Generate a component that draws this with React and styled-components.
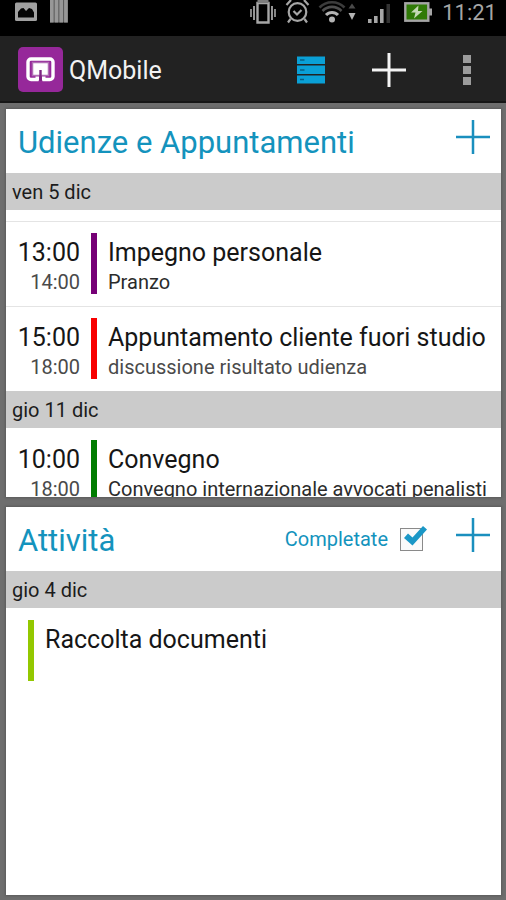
import React from "react";
import styled, { createGlobalStyle } from "styled-components";

const GlobalStyle = createGlobalStyle`
  * {
    box-sizing: border-box;
  }

  body {
    margin: 0;
    background: #6e6e6e;
    font-family: Roboto, "Liberation Sans", sans-serif;
  }
`;

const Screen = styled.div`
  display: flex;
  flex-direction: column;
  height: 100vh;
`;

const StatusBar = styled.div`
  flex: none;
  display: flex;
  justify-content: space-between;
  height: 36px;
  padding: 0 9px 0 15px;
  background: #000;
  color: #a6a6a6;
`;

const StatusGroup = styled.div`
  display: flex;
  align-items: flex-start;
  gap: ${p => p.$gap}px;

  & svg {
    display: block;
  }
`;

const Clock = styled.time`
  font-size: 22px;
  line-height: 26px;
`;

const ActionBar = styled.header`
  flex: none;
  display: flex;
  align-items: center;
  height: 67px;
  padding: 2px 0 0 18px;
  border-bottom: 2px solid #161616;
  background: #222;
`;

const AppTitle = styled.h1`
  flex: 1;
  margin: 0 0 0 6px;
  padding-top: 2px;
  font-size: 25px;
  font-weight: 400;
  color: #f2f2f2;
`;

const IconButton = styled.button`
  flex: none;
  display: flex;
  align-items: center;
  justify-content: center;
  width: ${p => p.$size}px;
  height: 56px;
  padding: 0;
  border: 0;
  background: none;
  cursor: pointer;
`;

const Main = styled.main`
  flex: 1;
  min-height: 0;
  display: flex;
  flex-direction: column;
  gap: 10px;
  padding: 6px 5px 5px 6px;
`;

const Panel = styled.section`
  flex: 1 1 0;
  min-height: 0;
  overflow: hidden;
  background: #fff;
  box-shadow: 0 0 2px 1px #5c5c5c;
`;

const PanelHeader = styled.div`
  display: flex;
  align-items: center;
  height: 64px;
  padding-left: 12px;
  color: #1493bd;
`;

const PanelTitle = styled.h2`
  flex: 1;
  margin: 0;
  padding-top: 2px;
  font-size: 31px;
  font-weight: 400;
  white-space: nowrap;
`;

const AddButton = styled(IconButton)`
  align-self: flex-start;
`;

const CompletedLabel = styled.label`
  display: flex;
  align-items: center;
  gap: 12px;
  margin-right: 22px;
  font-size: 20px;
`;

const CheckWrap = styled.span`
  position: relative;
  display: block;
  height: 23px;

  & svg {
    position: absolute;
    left: 3px;
    top: -3px;
    display: none;
    pointer-events: none;
  }

  & input:checked + svg {
    display: block;
  }
`;

const Checkbox = styled.input`
  appearance: none;
  display: block;
  width: 23px;
  height: 23px;
  margin: 0;
  border: 1px solid #8a8a8a;
  background: #fafafa;
`;

const Day = styled.h3`
  margin: 0;
  padding: 1px 6px 0;
  background: #cbcbcb;
  color: #1c1c1c;
  font-size: 20px;
  font-weight: 400;
  line-height: 36px;
`;

const List = styled.ul`
  margin: 0;
  padding: ${p => p.$top || 0}px 0 0;
  list-style: none;
`;

const Row = styled.li`
  display: flex;
  gap: 11px;
  padding: ${p => (p.$line ? 11 : 12)}px 0 12px ${p => p.$indent || 0}px;
  border-top: ${p => (p.$line ? "1px solid #e4e4e4" : "0")};
`;

const Times = styled.div`
  flex: none;
  width: 74px;
  text-align: right;
`;

const Bar = styled.span`
  flex: none;
  width: 6px;
  height: 61px;
  background: ${p => p.$color};
`;

const Primary = styled.div`
  padding-top: 1px;
  color: #161616;
  font-size: 25px;
  line-height: 37px;
  white-space: nowrap;
`;

const Secondary = styled.div`
  color: ${p => (p.$dark ? "#2b2b2b" : "#4a4a4a")};
  font-size: 20px;
  line-height: 22px;
  white-space: nowrap;
`;

const days = [
  {
    label: "ven 5 dic",
    top: 11,
    events: [
      { from: "13:00", to: "14:00", color: "#760076", title: "Impegno personale", note: "Pranzo", dark: true, line: true },
      { from: "15:00", to: "18:00", color: "#f80000", title: "Appuntamento cliente fuori studio", note: "discussione risultato udienza", line: true },
    ],
  },
  {
    label: "gio 11 dic",
    events: [
      { from: "10:00", to: "18:00", color: "#007c00", title: "Convegno", note: "Convegno internazionale avvocati penalisti", dark: true },
    ],
  },
];

const Plus = ({ color, width }) => (
  <svg width="34" height="34" viewBox="0 0 34 34" stroke={color} strokeWidth={width}>
    <path d="M17 0v34M0 17h34" />
  </svg>
);

const Logo = () => (
  <svg width="45" height="45" viewBox="0 0 45 45">
    <rect width="45" height="45" rx="5" fill="#96289a" />
    <path
      d="M20.500 32.500H13a3 3 0 0 1-3-3V15a3 3 0 0 1 3-3h19a3 3 0 0 1 3 3v14.500a3 3 0 0 1-3 3h-7.500"
      fill="none"
      stroke="#fff"
      strokeWidth="3.400"
    />
    <path d="M14.500 15.500h16v13h-16z" fill="#fff" stroke="#b06fb4" strokeWidth="1.500" />
    <path d="M21.300 23h2.400v11h-2.400z" fill="#7d2482" />
    <path d="M17.500 29.500h3.500v4h-3.500zM24 29.500h3.500v4H24z" fill="#fff" />
  </svg>
);

const PictureIcon = () => (
  <svg width="22" height="24" viewBox="0 0 22 24">
    <rect y="2.500" width="22" height="18.500" rx="1.500" fill="#a0a0a0" />
    <path d="M3 17.500V12l3-3.500 2.500-.5 2.500 3 3-3 3 1 2 3.500v5z" fill="#050505" />
  </svg>
);

const BarsIcon = () => (
  <svg width="18" height="24" viewBox="0 0 18 24">
    <path d="M0 0h18v22.500H0z" fill="#5c5c5c" />
    <path d="M0 0h3.600v22.500H0zM4.700 0h3.600v22.500H4.700zM9.400 0H13v22.500H9.400zM14.100 0h3.600v22.500h-3.600z" fill="#989898" />
  </svg>
);

const VibrateIcon = () => (
  <svg width="28" height="24" viewBox="0 0 28 24" fill="none" stroke="#a6a6a6">
    <path d="M8.500 3h11v19.500h-11z" strokeWidth="2.400" />
    <path d="M8.500 1.500h11" stroke="#7c7c7c" strokeWidth="3" />
    <path d="M5 6v14M23 6v14" strokeWidth="1.800" />
    <path d="M2 9v8M26 9v8" strokeWidth="1.600" />
  </svg>
);

const AlarmIcon = () => (
  <svg width="25" height="24" viewBox="0 0 25 24" fill="none" stroke="#a6a6a6" strokeWidth="2.200">
    <circle cx="12.500" cy="12" r="8.800" />
    <path d="M8.500 11l3.500 3.500 4.500-4.500M5.500 19L3 22.500M19.500 19l2.500 3.500M1.500 5l4.500-5M23.500 5L19-0" />
  </svg>
);

const WifiIcon = () => (
  <svg width="40" height="24" viewBox="0 0 40 24" fill="none" strokeWidth="2.600">
    <path d="M1.500 7.500a17.500 17.500 0 0 1 25 0" stroke="#3c3c3c" />
    <path d="M4.500 11a13 13 0 0 1 19 0" stroke="#4e4e4e" />
    <path d="M8 15a8.200 8.200 0 0 1 12 0" stroke="#b4b4b4" strokeWidth="3" />
    <circle cx="14" cy="19.500" r="3" fill="#b4b4b4" />
    <path d="M30.500 8.500h7L34 3.500z" fill="#4a4a4a" />
    <path d="M30.500 13h7L34 20z" fill="#b4b4b4" />
  </svg>
);

const SignalIcon = () => (
  <svg width="28" height="24" viewBox="0 0 28 24" fill="#a6a6a6">
    <path d="M2 19h3.600v4H2zM8 16h3.600v7H8zM14 9h3.600v14H14z" />
    <path d="M20.500 4h3.500v19h-3.500z" fill="#333" />
  </svg>
);

const BatteryIcon = () => (
  <svg width="32" height="24" viewBox="0 0 32 24">
    <rect x="3.300" y="3.300" width="23" height="17.400" fill="#2f7a06" stroke="#a6a6a6" strokeWidth="2.400" />
    <path d="M27 8.500h3v7h-3z" fill="#a6a6a6" />
    <path d="M16.500 5.500L9 12.500h4.500L12 18.500l8.500-7.500H16z" fill="#c4d8b4" />
  </svg>
);

const AgendaIcon = () => (
  <svg width="28" height="28" viewBox="0 0 28 28">
    <path d="M0 .5h28v7.500H0zM0 9.500h28V18H0zM0 19.500h28v8H0z" fill="#0aa0d6" />
    <path d="M3 4h4.500M3 14h4.500M3 23.500h4" stroke="#075f86" strokeWidth="1.500" />
  </svg>
);

const OverflowIcon = () => (
  <svg width="8" height="30" viewBox="0 0 8 30" fill="#9c9c9c">
    <path d="M0 0h8v8H0zM0 11h8v8H0zM0 22h8v8H0z" />
  </svg>
);

const Check = () => (
  <svg width="26" height="23" viewBox="0 0 26 23">
    <path d="M1 13l4-4.500 4.500 4L20 1l4 3.500L9.500 20.500z" fill="#1a97c6" />
  </svg>
);

export default function App() {
  return (
    <Screen>
      <GlobalStyle />
      <StatusBar>
        <StatusGroup $gap={13}>
          <PictureIcon />
          <BarsIcon />
        </StatusGroup>
        <StatusGroup $gap={8}>
          <VibrateIcon />
          <AlarmIcon />
          <WifiIcon />
          <SignalIcon />
          <BatteryIcon />
          <Clock>11:21</Clock>
        </StatusGroup>
      </StatusBar>

      <ActionBar>
        <Logo />
        <AppTitle>QMobile</AppTitle>
        <IconButton $size={78} aria-label="Agenda">
          <AgendaIcon />
        </IconButton>
        <IconButton $size={78} aria-label="Aggiungi">
          <Plus color="#f4f4f4" width={3} />
        </IconButton>
        <IconButton $size={78} aria-label="Altre opzioni">
          <OverflowIcon />
        </IconButton>
      </ActionBar>

      <Main>
        <Panel>
          <PanelHeader>
            <PanelTitle>Udienze e Appuntamenti</PanelTitle>
            <AddButton $size={56} aria-label="Aggiungi appuntamento">
              <Plus color="#1a8fbe" width={2.5} />
            </AddButton>
          </PanelHeader>
          {days.map(day => (
            <React.Fragment key={day.label}>
              <Day>{day.label}</Day>
              <List $top={day.top}>
                {day.events.map(event => (
                  <Row key={event.from} $line={event.line}>
                    <Times>
                      <Primary>{event.from}</Primary>
                      <Secondary>{event.to}</Secondary>
                    </Times>
                    <Bar $color={event.color} />
                    <div>
                      <Primary>{event.title}</Primary>
                      <Secondary $dark={event.dark}>{event.note}</Secondary>
                    </div>
                  </Row>
                ))}
              </List>
            </React.Fragment>
          ))}
        </Panel>

        <Panel>
          <PanelHeader>
            <PanelTitle>Attività</PanelTitle>
            <CompletedLabel>
              Completate
              <CheckWrap>
                <Checkbox type="checkbox" defaultChecked />
                <Check />
              </CheckWrap>
            </CompletedLabel>
            <AddButton $size={56} aria-label="Aggiungi attività">
              <Plus color="#1a8fbe" width={2.5} />
            </AddButton>
          </PanelHeader>
          <Day>gio 4 dic</Day>
          <List>
            <Row $indent={22}>
              <Bar $color="#93c800" />
              <Primary>Raccolta documenti</Primary>
            </Row>
          </List>
        </Panel>
      </Main>
    </Screen>
  );
}
